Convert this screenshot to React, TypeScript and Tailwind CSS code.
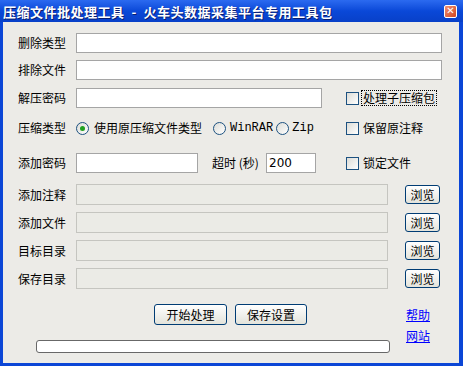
import React from "react";

const FONT = "font-['SimSun','Noto_Sans_CJK_SC',sans-serif]";

function Label({ text }: { text: string }) {
  return <span className="w-[58px] shrink-0 text-[12px] leading-none text-black">{text}</span>;
}

function TextBox({ w, disabled, value }: { w: string; disabled?: boolean; value?: string }) {
  return (
    <div
      className={`${w} h-[20px] border flex items-center px-[2px] text-[12px] font-['Tahoma','DejaVu_Sans',sans-serif] ${
        disabled ? "bg-[#ebebe6] border-[#c5c5c0]" : "bg-white border-[#a5a5a5]"
      }`}
    >
      {value}
    </div>
  );
}

function Check({ text, focus }: { text: string; focus?: boolean }) {
  return (
    <div className="flex items-center gap-[3px]">
      <span className="w-[13px] h-[13px] border border-[#1c5180] bg-gradient-to-br from-[#dcdcd7] to-white" />
      <span className={`text-[12px] leading-[14px] px-[1px] ${focus ? "outline outline-1 outline-dotted outline-black" : ""}`}>
        {text}
      </span>
    </div>
  );
}

function Radio({ checked }: { checked?: boolean }) {
  return (
    <span className="w-[13px] h-[13px] rounded-full border border-[#1c5180] bg-gradient-to-br from-[#dcdcd7] to-white flex items-center justify-center shrink-0">
      {checked && <span className="w-[5px] h-[5px] rounded-full bg-[#21a121]" />}
    </span>
  );
}

function XpButton({ text, w, h }: { text: string; w: string; h: string }) {
  return (
    <button
      className={`${w} ${h} rounded-[3px] border border-[#003c74] bg-gradient-to-b from-white to-[#e3e3db] text-[12px] leading-none text-black flex items-center justify-center`}
    >
      {text}
    </button>
  );
}

export default function App() {
  const browseRows = ["添加注释", "添加文件", "目标目录", "保存目录"];
  return (
    <div className={`w-[463px] h-[366px] bg-[#0b46d6] flex flex-col ${FONT}`}>
      <div className="h-[22px] shrink-0 flex items-center justify-between pl-[3px] pr-[6px] bg-gradient-to-b from-[#2b6af0] via-[#0a48d8] to-[#0840c8]">
        <span className="text-white font-bold text-[13px] leading-none tracking-[0.5px] whitespace-pre [text-shadow:1px_1px_0_#0a1e6e]">
          {"压缩文件批处理工具  -  火车头数据采集平台专用工具包"}
        </span>
        <span className="w-[13px] h-[13px] rounded-[2px] border border-white bg-gradient-to-br from-[#f09070] to-[#d0441c] flex items-center justify-center text-white text-[10px] font-bold leading-none font-['DejaVu_Sans',sans-serif]">
          ✕
        </span>
      </div>

      <div className="flex-1 ml-[3px] mr-[4px] mb-[3px] bg-[#ecebe7] pl-[15px] pt-[11px] flex flex-col">
        <div className="flex items-center h-[20px]">
          <Label text="删除类型" />
          <TextBox w="w-[366px]" />
        </div>
        <div className="flex items-center h-[20px] mt-[7px]">
          <Label text="排除文件" />
          <TextBox w="w-[366px]" />
        </div>
        <div className="flex items-center h-[20px] mt-[8px]">
          <Label text="解压密码" />
          <TextBox w="w-[246px]" />
          <div className="ml-[24px]">
            <Check text="处理子压缩包" focus />
          </div>
        </div>
        <div className="flex items-center h-[20px] mt-[10px]">
          <Label text="压缩类型" />
          <div className="flex items-center w-[270px]">
            <Radio checked />
            <span className="ml-[5px] text-[12px]">使用原压缩文件类型</span>
            <span className="ml-[11px]"><Radio /></span>
            <span className="ml-[4px] text-[12px] font-['Liberation_Mono',monospace]">WinRAR</span>
            <span className="ml-[3px]"><Radio /></span>
            <span className="ml-[3px] text-[12px] font-['Liberation_Mono',monospace]">Zip</span>
          </div>
          <Check text="保留原注释" />
        </div>
        <div className="flex items-center h-[20px] mt-[15px]">
          <Label text="添加密码" />
          <TextBox w="w-[122px]" />
          <span className="ml-[14px] w-[54px] text-[12px]">超时 (秒)</span>
          <TextBox w="w-[50px]" value="200" />
          <div className="ml-[30px]">
            <Check text="锁定文件" />
          </div>
        </div>
        <div className="flex flex-col gap-[7px] mt-[11px]">
          {browseRows.map((r) => (
            <div key={r} className="flex items-center h-[21px]">
              <Label text={r} />
              <div className="w-[312px] h-[21px] border border-[#c5c5c0] bg-[#ebebe6]" />
              <div className="ml-[17px]">
                <XpButton text="浏览" w="w-[35px]" h="h-[19px]" />
              </div>
            </div>
          ))}
        </div>

        <div className="flex mt-[15px]">
          <div className="w-[388px] flex flex-col">
            <div className="flex gap-[8px] pl-[136px]">
              <XpButton text="开始处理" w="w-[73px]" h="h-[21px]" />
              <XpButton text="保存设置" w="w-[72px]" h="h-[21px]" />
            </div>
            <div className="ml-[18px] mt-[15px] w-[354px] h-[13px] rounded-[3px] border border-[#686868] bg-white" />
          </div>
          <div className="flex flex-col gap-[8px] pt-[4px]">
            <a className="text-[12px] leading-[13px] text-[#0000ff] underline">帮助</a>
            <a className="text-[12px] leading-[13px] text-[#0000ff] underline">网站</a>
          </div>
        </div>
      </div>
    </div>
  );
}
